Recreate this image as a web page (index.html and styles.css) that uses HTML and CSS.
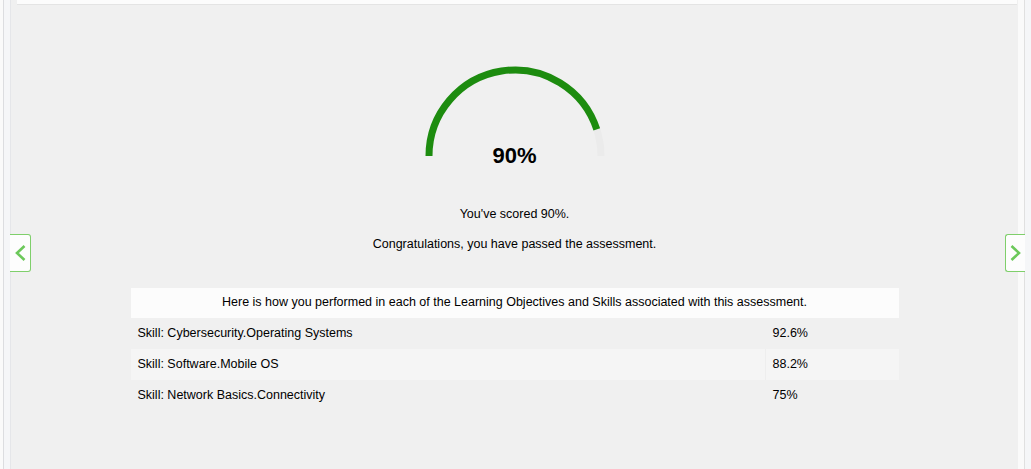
FILE: index.html
```html
<!DOCTYPE html>
<html>
<head>
<meta charset="utf-8">
<link rel="stylesheet" href="styles.css">
</head>
<body>
<div class="rail-left"></div>
<main class="main">
  <div class="topbar"></div>
  <div class="content">
    <div class="gauge">
      <svg class="gauge-svg" width="182" height="94" viewBox="0 0 182 94">
        <path d="M 5 91 A 86 86 0 0 1 177 91" fill="none" stroke="#ebebeb" stroke-width="7"/>
        <path d="M 5 91 A 86 86 0 0 1 172.79 64.42" fill="none" stroke="#1d8c0f" stroke-width="7"/>
      </svg>
      <div class="gauge-value">90%</div>
    </div>
    <p class="msg msg-score">You've scored 90%.</p>
    <p class="msg msg-pass">Congratulations, you have passed the assessment.</p>
    <div class="results">
      <div class="results-head">Here is how you performed in each of the Learning Objectives and Skills associated with this assessment.</div>
      <div class="row">
        <div class="cell cell-name">Skill: Cybersecurity.Operating Systems</div>
        <div class="cell cell-score">92.6%</div>
      </div>
      <div class="row row-alt">
        <div class="cell cell-name">Skill: Software.Mobile OS</div>
        <div class="cell cell-score">88.2%</div>
      </div>
      <div class="row">
        <div class="cell cell-name">Skill: Network Basics.Connectivity</div>
        <div class="cell cell-score">75%</div>
      </div>
    </div>
  </div>
</main>
<div class="rail-right"></div>
<button class="nav nav-prev" aria-label="Previous">
  <svg width="13" height="16" viewBox="0 0 13 16"><path d="M10.5 1 L3 8 L10.5 15" fill="none" stroke="#6cc85a" stroke-width="2.6"/></svg>
</button>
<button class="nav nav-next" aria-label="Next">
  <svg width="13" height="16" viewBox="0 0 13 16"><path d="M2.5 1 L10 8 L2.5 15" fill="none" stroke="#6cc85a" stroke-width="2.6"/></svg>
</button>
</body>
</html>
```

FILE: styles.css
```css
html, body {
  margin: 0;
  padding: 0;
}
body {
  display: flex;
  height: 469px;
  overflow: hidden;
  background: #fafafa;
  font-family: "Liberation Sans", Arial, sans-serif;
  font-size: 12.5px;
  color: #000;
  position: relative;
}
.rail-left {
  flex: 0 0 6px;
  margin-left: 3px;
  background: #f5f6f8;
  border-left: 1px solid #dcdde0;
  border-right: 1px solid #e5e6e9;
}
.main {
  flex: 0 0 1007px;
  background: #f0f0f0;
  display: flex;
  flex-direction: column;
}
.topbar {
  height: 4px;
  margin: 0 1px 0 6px;
  background: #fcfcfc;
  border-bottom: 1px solid #e4e4e4;
}
.content {
  display: flex;
  flex-direction: column;
  align-items: center;
  padding-top: 60px;
}
.gauge {
  display: grid;
  height: 103px;
  justify-items: center;
}
.gauge-svg {
  grid-area: 1 / 1;
  align-self: start;
  display: block;
}
.gauge-value {
  grid-area: 1 / 1;
  align-self: end;
  font-size: 22px;
  font-weight: bold;
  line-height: 25px;
  color: #000;
}
.msg {
  margin: 0;
  line-height: 14px;
}
.msg-score {
  margin-top: 39px;
}
.msg-pass {
  margin-top: 16px;
}
.results {
  width: 768px;
  margin-top: 37px;
}
.results-head {
  background: #fcfcfc;
  text-align: center;
  line-height: 14px;
  padding: 7px 0 9px;
}
.row {
  display: flex;
}
.row-alt {
  background: #f5f5f5;
}
.cell {
  line-height: 14px;
  padding: 8px 7px 9px;
}
.cell-name {
  flex: 0 0 621px;
}
.row-alt .cell-name {
  border-right: 1px solid #eeeeee;
  flex-basis: 620px;
}
.cell-score {
  flex: 1;
}
.rail-right {
  flex: 0 0 6px;
  margin-left: 6px;
  background: #f5f6f8;
  border-left: 1px solid #e0e0e0;
}
.nav {
  position: absolute;
  top: 234px;
  width: 21px;
  height: 38px;
  padding: 0;
  background: #fdfdfd;
  border: 1px solid #7fcf6b;
  display: flex;
  align-items: center;
  justify-content: center;
  cursor: pointer;
}
.nav-prev {
  left: 10px;
  border-left: none;
  border-radius: 0 3px 3px 0;
}
.nav-next {
  left: 1005px;
  width: 20px;
  border-right: none;
  border-radius: 3px 0 0 3px;
}
```
